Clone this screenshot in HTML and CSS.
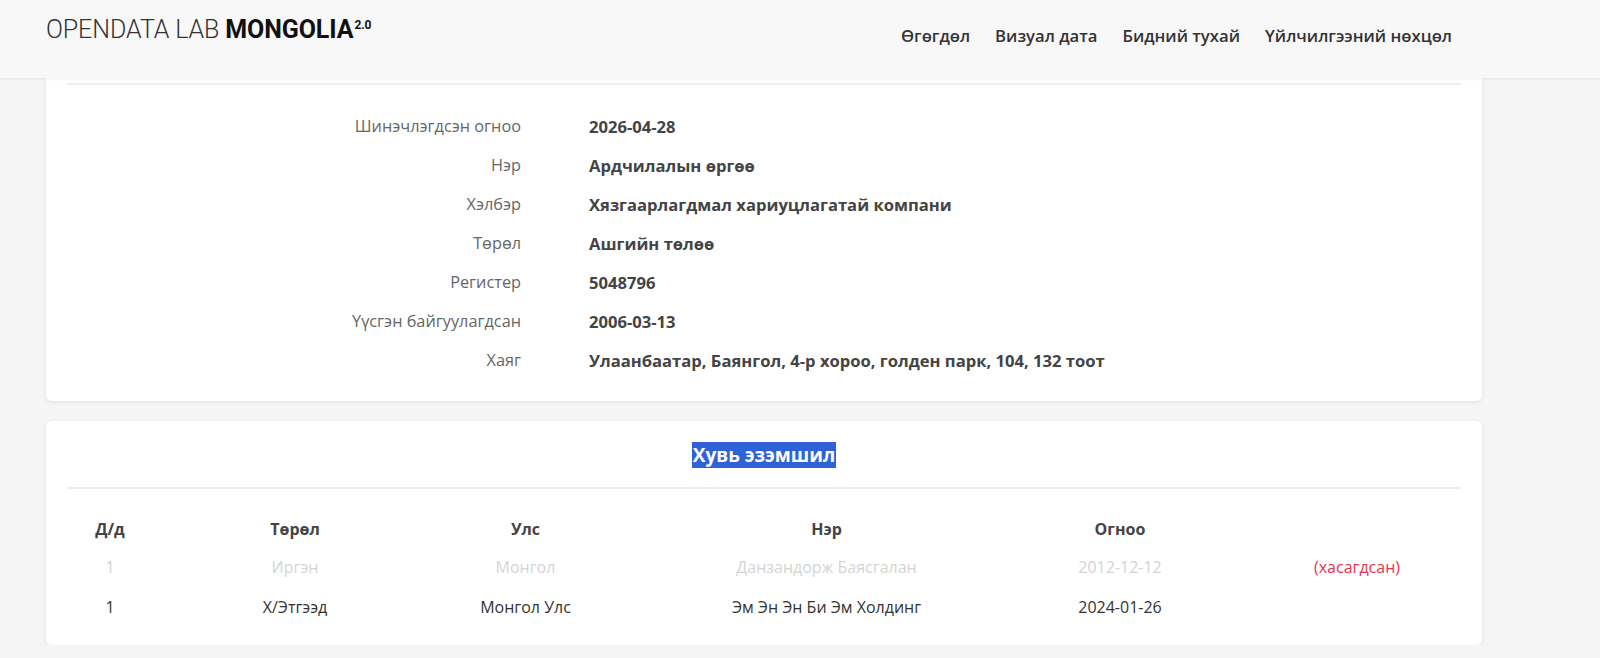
FILE: index.html
```html
<!DOCTYPE html>
<html lang="mn">
<head>
  <meta charset="UTF-8">
  <meta name="viewport" content="width=device-width, initial-scale=1">
  <title>Ардчилалын өргөө - OpenData Lab Mongolia</title>
  <link rel="stylesheet" href="styles.css">
</head>
<body>
  <header class="navbar">
    <a class="brand" href="#">OPENDATA LAB <b>MONGOLIA</b><sup>2.0</sup></a>
    <nav class="menu">
      <a href="#">Өгөгдөл</a>
      <a href="#">Визуал дата</a>
      <a href="#">Бидний тухай</a>
      <a href="#">Үйлчилгээний нөхцөл</a>
    </nav>
  </header>

  <main class="content">
    <section class="card info-card">
      <hr class="divider">
      <dl class="info">
        <dt>Шинэчлэгдсэн огноо</dt><dd>2026-04-28</dd>
        <dt>Нэр</dt><dd>Ардчилалын өргөө</dd>
        <dt>Хэлбэр</dt><dd>Хязгаарлагдмал хариуцлагатай компани</dd>
        <dt>Төрөл</dt><dd>Ашгийн төлөө</dd>
        <dt>Регистер</dt><dd>5048796</dd>
        <dt>Үүсгэн байгуулагдсан</dt><dd>2006-03-13</dd>
        <dt>Хаяг</dt><dd>Улаанбаатар, Баянгол, 4-р хороо, голден парк, 104, 132 тоот</dd>
      </dl>
    </section>

    <section class="card owners-card">
      <h2 class="card-title"><span class="selected">Хувь эзэмшил</span></h2>
      <hr class="divider">
      <table class="owners">
        <colgroup>
          <col class="c-no"><col class="c-type"><col class="c-country"><col class="c-name"><col class="c-date"><col class="c-note">
        </colgroup>
        <thead>
          <tr><th>Д/д</th><th>Төрөл</th><th>Улс</th><th>Нэр</th><th>Огноо</th><th></th></tr>
        </thead>
        <tbody>
          <tr class="removed">
            <td>1</td><td>Иргэн</td><td>Монгол</td><td>Данзандорж Баясгалан</td><td>2012-12-12</td><td class="note">(хасагдсан)</td>
          </tr>
          <tr>
            <td>1</td><td>Х/Этгээд</td><td>Монгол Улс</td><td>Эм Эн Эн Би Эм Холдинг</td><td>2024-01-26</td><td class="note"></td>
          </tr>
        </tbody>
      </table>
    </section>
  </main>
</body>
</html>
```

FILE: styles.css
```css
* { box-sizing: border-box; }
body {
  margin: 0;
  font-family: 'Open Sans', 'Noto Sans', sans-serif;
  font-size: 16px;
  color: #444;
  background: #f5f5f5;
}
a {
  text-decoration: none;
}

.navbar {
  height: 78px;
  background: #f8f8f8;
  box-shadow: 0 1px 3px rgba(0, 0, 0, 0.07);
  display: flex;
  align-items: flex-start;
  justify-content: space-between;
  padding: 0 148px 0 46px;
  position: relative;
  z-index: 1;
}
.brand {
  font-family: 'Roboto', sans-serif;
  font-weight: 300;
  font-size: 25px;
  color: #333;
  margin-top: 15px;
  letter-spacing: -0.1px;
}
.brand b {
  font-weight: 700;
  color: #111;
}
.brand sup {
  font-size: 12px;
  font-weight: 700;
  color: #111;
  margin-left: 1px;
}
.menu {
  display: flex;
  gap: 25px;
  margin-top: 24px;
}
.menu a {
  color: #333;
  font-weight: 600;
  font-size: 16.7px;
}

.content {
  width: 1482px;
  padding-left: 46px;
}
.card {
  background: #fff;
  border-radius: 6px;
  box-shadow: 0 1px 4px rgba(0, 0, 0, 0.08);
  padding: 0 21px;
}
.divider {
  border: none;
  border-top: 2px solid #eee;
  margin: 0;
}
.info-card {
  border-radius: 0 0 6px 6px;
  padding-top: 5px;
  padding-bottom: 21px;
}
.info {
  display: grid;
  grid-template-columns: 454px 1fr;
  column-gap: 68px;
  margin: 22px 0 0;
}
.info dt,
.info dd {
  margin: 0;
  height: 39px;
  line-height: 39px;
}
.info dt {
  text-align: right;
  color: #666;
  font-size: 16.3px;
}
.info dd {
  font-weight: 700;
  font-size: 16.6px;
  color: #444;
}

.owners-card {
  margin-top: 20px;
  padding-bottom: 18px;
}
.card-title {
  margin: 0;
  padding: 21px 0 19px;
  text-align: center;
  font-size: 19px;
  line-height: 26px;
  font-weight: 700;
}
.selected {
  background: #2f62d6;
  color: #fff;
  padding: 0 1px;
}
.owners {
  width: 100%;
  border-collapse: collapse;
  table-layout: fixed;
  margin-top: 21px;
}
.c-no { width: 86px; }
.c-type { width: 284px; }
.c-country { width: 177px; }
.c-name { width: 425px; }
.c-date { width: 162px; }
.owners th,
.owners td {
  text-align: center;
  height: 40px;
  padding: 0;
}
.owners th {
  height: 37px;
  font-weight: 700;
  color: #444;
}
.owners td {
  color: #333;
}
.owners .note {
  padding-left: 52px;
}
.removed td {
  color: #d4d4d4;
}
.removed .note {
  color: #e8344e;
}
```
